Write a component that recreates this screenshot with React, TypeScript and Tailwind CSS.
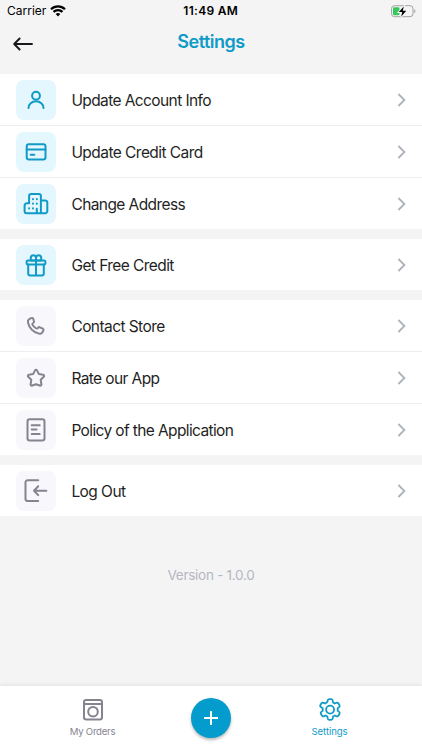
import type { ReactNode } from "react";

type Item = { label: string; icon: ReactNode; tracking: string };

const stroke = {
  fill: "none",
  stroke: "currentColor",
  strokeWidth: 2,
  strokeLinecap: "round" as const,
  strokeLinejoin: "round" as const,
};

function Icon({ children }: { children: ReactNode }) {
  return (
    <svg width="28" height="28" viewBox="0 0 28 28" {...stroke}>
      {children}
    </svg>
  );
}

const account: Item[] = [
  {
    label: "Update Account Info",
    tracking: "tracking-[-0.6px]",
    icon: (
      <Icon>
        <circle cx="14" cy="9.7" r="3.9" />
        <path d="M6.500 21.900a7.500 6.700 0 0 1 15 0" />
      </Icon>
    ),
  },
  {
    label: "Update Credit Card",
    tracking: "tracking-[-0.55px]",
    icon: (
      <Icon>
        <rect x="4.700" y="6.300" width="18.800" height="15.100" rx="2.200" />
        <path d="M4.700 11.400h18.800M8.700 16.700h3.600" />
      </Icon>
    ),
  },
  {
    label: "Change Address",
    tracking: "tracking-[-0.58px]",
    icon: (
      <Icon>
        <path d="M7.100 12.200V6a2 2 0 0 1 2-2h7.800a2 2 0 0 1 2 2v17.200H4.600a2 2 0 0 1-2-2v-5.600a2.400 2.400 0 0 1 2.400-2.400h2.100zM18.900 10.400h4.300a2.100 2.100 0 0 1 2.100 2.100v8.600a2.100 2.100 0 0 1-2.100 2.100h-4.300M14.800 23v-4.200" />
        <path d="M11 9v.2M14.800 9v.2M11 13.600v.2M14.800 13.600v.2M7.100 18.200v.2M11 18.200v.2" />
      </Icon>
    ),
  },
];

const credit: Item[] = [
  {
    label: "Get Free Credit",
    tracking: "tracking-[-0.57px]",
    icon: (
      <Icon>
        <rect x="4.600" y="9.500" width="18.800" height="4" rx="1.300" />
        <path d="M6.200 13.500v9a2 2 0 0 0 2 2h11.600a2 2 0 0 0 2-2v-9M14 9.500v15M14 9.500H8.800V6.800a2.600 2.600 0 0 1 5.200 0v2.700h5.200V6.800a2.600 2.600 0 0 0-5.200 0" />
      </Icon>
    ),
  },
];

const support: Item[] = [
  {
    label: "Contact Store",
    tracking: "tracking-[-0.57px]",
    icon: (
      <Icon>
        <path d="M9 6.200 7 7.300c-1 .6-1.300 1.900-1 3.100 1.300 5.500 5.500 9.800 11 11.200 1.300.3 2.700.1 3.300-1l1.100-2c.4-.8.1-1.500-.6-1.900l-2.900-1.400c-.8-.4-1.400-.1-1.900.5-.7.8-1.500.8-2.400.2-1.300-.8-2.300-1.900-3.100-3.200-.4-.8-.1-1.400.6-1.800.8-.5 1.200-1.100.9-1.900l-.8-2.400c-.3-.8-1.500-1-2.200-.500z" />
      </Icon>
    ),
  },
  {
    label: "Rate our App",
    tracking: "tracking-[-0.6px]",
    icon: (
      <Icon>
        <path d="M13 6.400a1.100 1.100 0 0 1 2 0l1.900 3.700 4.300.7a1.100 1.100 0 0 1 .6 1.900L18.700 15.800l.7 4.500a1.100 1.100 0 0 1-1.600 1.200L14 20.300l-3.800 1.200a1.100 1.100 0 0 1-1.600-1.200l.7-4.500-3.100-3.100a1.100 1.100 0 0 1 .6-1.900l4.300-.7z" />
      </Icon>
    ),
  },
  {
    label: "Policy of the Application",
    tracking: "tracking-[-0.62px]",
    icon: (
      <Icon>
        <rect x="5.500" y="3.200" width="17" height="21.200" rx="2.200" />
        <path d="M9.700 9.300h8M9.700 13.600h4.800M9.700 17.900h8" />
      </Icon>
    ),
  },
];

const session: Item[] = [
  {
    label: "Log Out",
    tracking: "tracking-[-0.55px]",
    icon: (
      <Icon>
        <path d="M16.200 3.200H5.700a2.200 2.200 0 0 0-2.200 2.200v16.400a2.200 2.200 0 0 0 2.200 2.200h10.500M24.300 13.700H12M16.200 9.300 12 13.700l4.200 4.400" />
      </Icon>
    ),
  },
];

function Row({ item, active, last }: { item: Item; active: boolean; last: boolean }) {
  return (
    <li className={`flex items-center pr-4 pl-4 ${last ? "h-[51px]" : "h-[52px] border-b border-[#ededf0]"}`}>
      <span
        className={`flex size-10 shrink-0 items-center justify-center rounded-[8px] ${
          active ? "bg-[#e4f6fe] text-[#109bc7]" : "bg-[#f7f7fc] text-[#85838f]"
        }`}
      >
        {item.icon}
      </span>
      <span className={`ml-[15.4px] flex-1 pt-[2px] text-[15.5px] leading-5 whitespace-nowrap text-[#1f1f24] ${item.tracking}`}>
        {item.label}
      </span>
      <svg width="9" height="14" viewBox="0 0 9 14" fill="none" stroke="#adb1b9" strokeWidth="1.800">
        <path d="m1.400 1 6 6-6 6" />
      </svg>
    </li>
  );
}

function Group({ items, active = false }: { items: Item[]; active?: boolean }) {
  return (
    <ul className="bg-white">
      {items.map((item, i) => (
        <Row key={item.label} item={item} active={active} last={i === items.length - 1} />
      ))}
    </ul>
  );
}

export default function App() {
  return (
    <div className="flex h-[750px] w-[422px] flex-col overflow-hidden bg-[#f4f4f5] font-['Inter','Liberation_Sans',sans-serif]">
      <div className="grid h-[22px] shrink-0 grid-cols-3 items-center pr-[6px] pl-[7px] text-[12px] leading-4 text-black">
        <div className="flex items-center gap-[4px]">
          <span>Carrier</span>
          <svg width="16" height="12" viewBox="0 0 16 12" fill="none" stroke="#000" strokeWidth="2.200">
            <path d="M1 4.200a10 10 0 0 1 14 0M3.500 6.900a6.400 6.400 0 0 1 9 0" />
            <path d="m8 11.500-2.300-2.400a3.300 3.300 0 0 1 4.600 0z" fill="#000" stroke="none" />
          </svg>
        </div>
        <span className="pr-[1.5px] text-center font-semibold tracking-[0.3px]">11:49 AM</span>
        <svg className="justify-self-end" width="26" height="13" viewBox="0 0 26 13">
          <rect x="1.500" y=".7" width="21.500" height="11" rx="3" fill="none" stroke="#a2a2a5" />
          <rect x="3" y="2.200" width="6.500" height="8" rx="1.300" fill="#34c759" />
          <path d="M24.300 4.300c1.500.4 1.500 3.500 0 3.900z" fill="#a2a2a5" />
          <path d="M13.800 1.600 8.800 7h3.400l-1 4.600L16.300 5.700h-3.500z" fill="#000" stroke="#f4f4f5" strokeWidth="1.800" paintOrder="stroke" />
        </svg>
      </div>

      <header className="grid h-[52px] shrink-0 grid-cols-3 px-[13px]">
        <svg className="mt-[15px]" width="20" height="14" viewBox="0 0 20 14" fill="none" stroke="#17181b" strokeWidth="1.900" strokeLinecap="round" strokeLinejoin="round">
          <path d="M19 7H1.200M6.600 1.500 1.200 7l5.400 5.500" />
        </svg>
        <h1 className="mt-2 text-center text-[18px] leading-6 font-semibold tracking-[-0.5px] text-[#109bc7]">Settings</h1>
      </header>

      <main className="flex flex-1 flex-col gap-[10px]">
        <Group items={account} active />
        <Group items={credit} active />
        <Group items={support} />
        <Group items={session} />
        <p className="mt-[39px] text-center text-[13.5px] leading-5 tracking-[-0.27px] text-[#b5b7c1]">Version - 1.0.0</p>
      </main>

      <nav className="flex h-[64px] shrink-0 items-start bg-white px-[33px] text-[10px] leading-3 shadow-[0_-1px_4px_rgba(0,0,0,0.08)]">
        <div className="flex w-[119px] flex-col items-center pt-[12px] text-[#85838f]">
          <svg width="22" height="24" viewBox="0 0 22 24" {...stroke}>
            <rect x="2" y="1.900" width="18" height="19.500" rx="2.200" />
            <path d="M2 6h18" />
            <circle cx="11" cy="13.700" r="4.800" />
          </svg>
          <span className="mt-[4px] text-[9.6px] tracking-[-0.25px]">My Orders</span>
        </div>
        <div className="flex w-[118px] justify-center pt-[12px]">
          <span className="flex size-10 items-center justify-center rounded-full bg-[#049ccc] shadow-[0_2px_3px_rgba(0,0,0,0.28)]">
            <svg width="14" height="14" viewBox="0 0 14 14" stroke="#fff" strokeWidth="2">
              <path d="M7 0v14M0 7h14" />
            </svg>
          </span>
        </div>
        <div className="flex w-[119px] flex-col items-center pt-[12px] text-[#109bc7]">
          <svg width="24" height="24" viewBox="0 0 24 24" {...stroke} strokeWidth="1.800">
            <path d="M9.400 3Q9.600 1.200 11 1.200h2q1.400 0 1.600 1.800l.2 1.500 1.800 1 1.400-.6q1.600-.6 2.300.6l1 1.700q.7 1.200-.6 2.200l-1.200.9v2.400l1.200.9q1.300 1 .6 2.200l-1 1.700q-.7 1.200-2.300.6l-1.400-.6-1.800 1-.2 1.500q-.2 1.800-1.600 1.800h-2q-1.400 0-1.600-1.800l-.2-1.500-1.800-1-1.400.6q-1.600.6-2.300-.6l-1-1.700q-.7-1.200.6-2.200l1.200-.9v-2.400l-1.200-.9Q1.400 8.400 2.100 7.200l1-1.700Q3.800 4.300 5.400 4.900l1.400.6 1.800-1z" transform="translate(.2)" />
            <circle cx="12.100" cy="11.600" r="4" />
          </svg>
          <span className="mt-[4px] text-[9.6px] tracking-[-0.1px]">Settings</span>
        </div>
      </nav>
    </div>
  );
}
